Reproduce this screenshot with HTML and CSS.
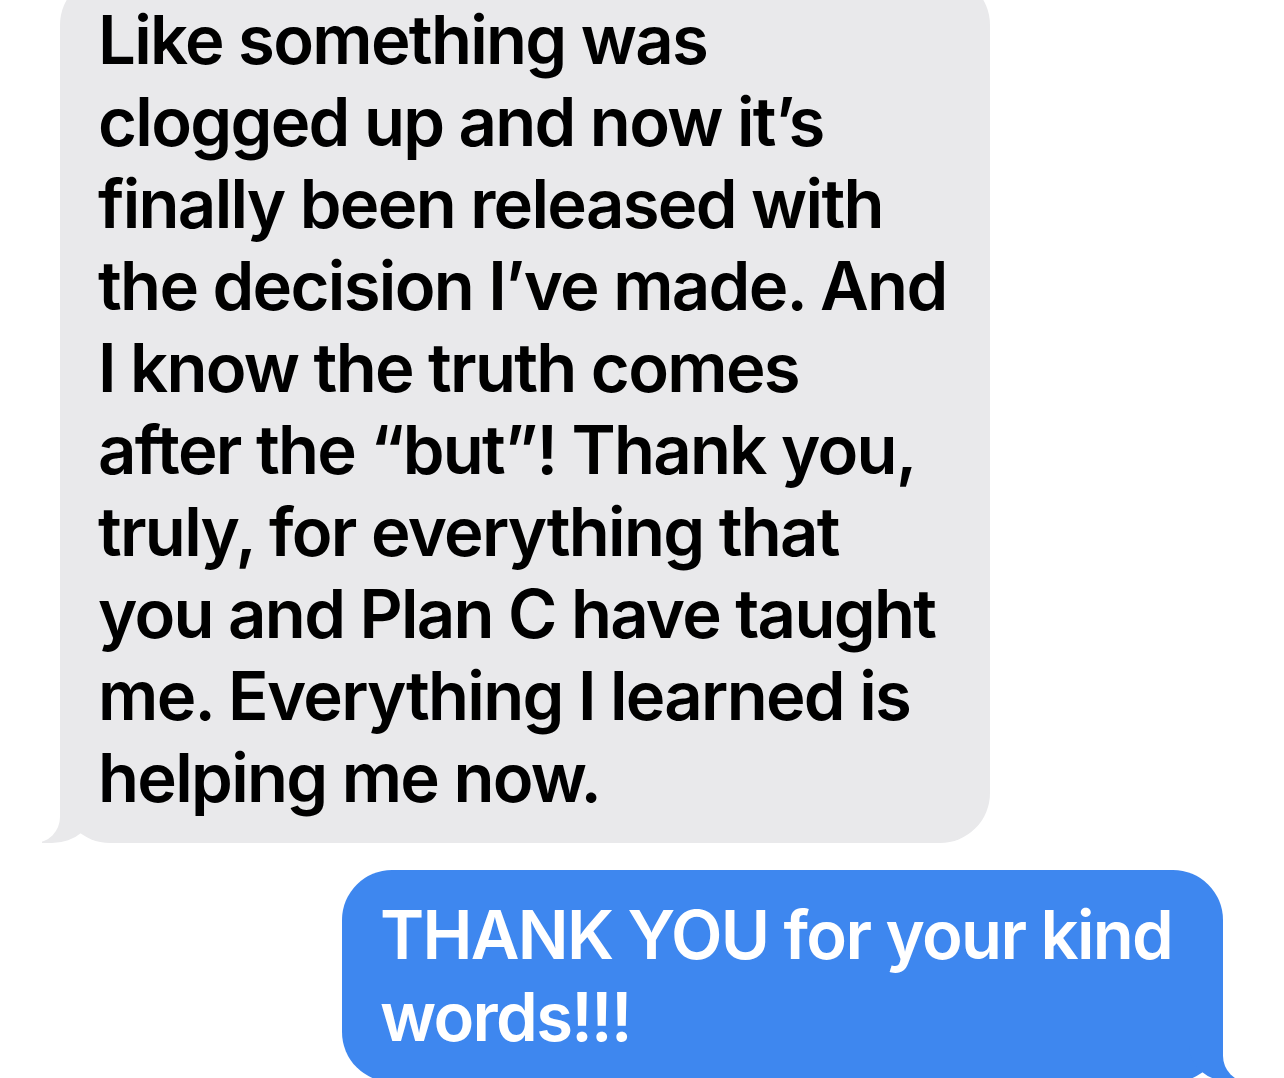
FILE: index.html
```
<!DOCTYPE html>
<html lang="en">
<head>
    <meta charset="UTF-8">
    <meta name="viewport" content="width=device-width, initial-scale=1.0">
    <title>Messages</title>
    <link rel="stylesheet" href="styles.css">
</head>
<body>
    <div class="thread">
        <div class="bubble them">
            Like something was<br>
            clogged up and now it’s<br>
            finally been released with<br>
            the decision I’ve made. And<br>
            I know the truth comes<br>
            after the “but”! Thank you,<br>
            truly, for everything that<br>
            you and Plan C have taught<br>
            me. Everything I learned is<br>
            helping me now.
        </div>
        <div class="bubble me">
            THANK YOU for your kind<br>
            words!!!
        </div>
    </div>
</body>
</html>
```
FILE: styles.css
```
body {
    margin: 0;
    background-color: #ffffff;
    font-family: Inter, "Noto Sans", sans-serif;
    overflow: hidden;
}
.thread {
    display: flex;
    flex-direction: column;
    gap: 27px;
}
.bubble {
    position: relative;
    box-sizing: border-box;
    font-size: 67px;
    font-weight: 600;
    line-height: 82px;
    letter-spacing: -1.7px;
    white-space: nowrap;
    border-radius: 50px;
    padding: 24px 38px 24px 38px;
}
.bubble::before,
.bubble::after {
    content: "";
    position: absolute;
    bottom: 0;
    height: 65px;
}
.them {
    align-self: flex-start;
    width: 930px;
    margin-top: -25px;
    margin-left: 60px;
    background-color: #e9e9eb;
    color: #000000;
}
.them::before {
    left: -18px;
    width: 52px;
    background-color: #e9e9eb;
    border-bottom-right-radius: 42px 36px;
}
.them::after {
    left: -68px;
    width: 68px;
    background-color: #ffffff;
    border-bottom-right-radius: 26px;
}
.me {
    align-self: flex-end;
    width: 881px;
    margin-right: 61px;
    background-color: #3e87ef;
    color: #ffffff;
}
.me::before {
    right: -18px;
    width: 52px;
    background-color: #3e87ef;
    border-bottom-left-radius: 42px 36px;
}
.me::after {
    right: -68px;
    width: 68px;
    background-color: #ffffff;
    border-bottom-left-radius: 26px;
}
```
